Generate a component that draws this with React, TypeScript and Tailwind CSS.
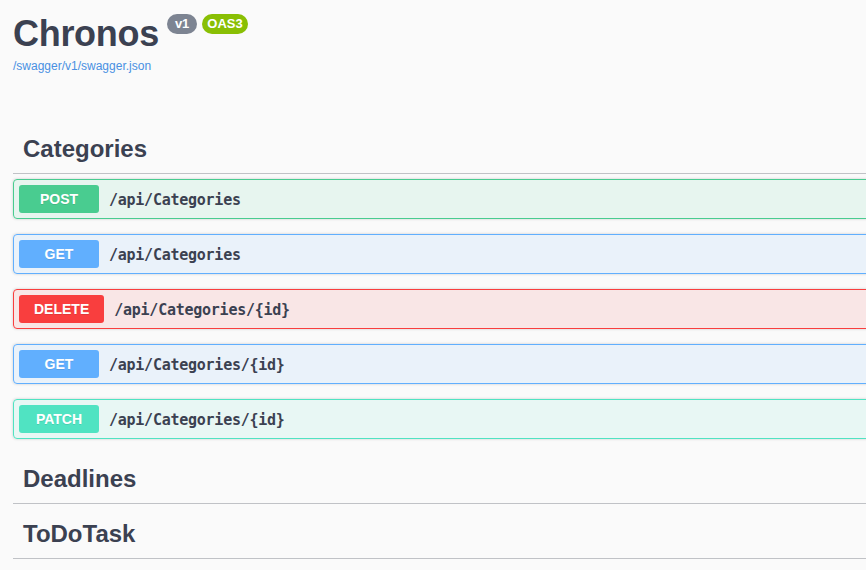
import React from "react";

type Method = "POST" | "GET" | "DELETE" | "PATCH";

interface Operation {
  method: Method;
  path: string;
}

const methodStyles: Record<Method, { block: string; button: string }> = {
  POST: { block: "border-[#49cc90] bg-[#49cc90]/10", button: "bg-[#49cc90]" },
  GET: { block: "border-[#61affe] bg-[#61affe]/10", button: "bg-[#61affe]" },
  DELETE: { block: "border-[#f93e3e] bg-[#f93e3e]/10", button: "bg-[#f93e3e]" },
  PATCH: { block: "border-[#50e3c2] bg-[#50e3c2]/10", button: "bg-[#50e3c2]" },
};

const categories: Operation[] = [
  { method: "POST", path: "/api/Categories" },
  { method: "GET", path: "/api/Categories" },
  { method: "DELETE", path: "/api/Categories/{id}" },
  { method: "GET", path: "/api/Categories/{id}" },
  { method: "PATCH", path: "/api/Categories/{id}" },
];

function TagHeader({ name }: { name: string }) {
  return (
    <div className="box-border flex h-[50px] items-center border-b border-[#3b4151]/30 pl-[10px] mb-[5px]">
      <h3 className="text-[24px] leading-[29px] font-bold text-[#3b4151]">{name}</h3>
    </div>
  );
}

function OpBlock({ op }: { op: Operation }) {
  const s = methodStyles[op.method];
  return (
    <div
      className={`box-border h-[40px] mb-[15px] flex items-center rounded-[4px] border p-[5px] shadow-[0_0_3px_rgba(0,0,0,0.19)] ${s.block}`}
    >
      <span
        className={`flex h-[28px] min-w-[80px] items-center justify-center rounded-[3px] px-[15px] text-[14px] font-bold text-white [text-shadow:0_1px_0_rgba(0,0,0,0.1)] ${s.button}`}
      >
        {op.method}
      </span>
      <span className="px-[10px] pt-[2px] font-['DejaVu_Sans_Mono',monospace] text-[15px] tracking-[-0.25px] font-semibold text-[#3b4151]">
        {op.path}
      </span>
    </div>
  );
}

export default function App() {
  return (
    <div className="h-[570px] w-full overflow-hidden bg-[#fafafa] font-['Liberation_Sans',Arial,sans-serif]">
      <div className="w-[1400px] px-[13px]">
        <div className="pt-[13px]">
          <div className="flex items-start">
            <h2 className="text-[36px] leading-[42px] tracking-[-0.3px] font-bold text-[#3b4151]">Chronos</h2>
            <span className="ml-[8px] mt-[1px] h-[20px] rounded-full bg-[#7d8492] px-[8px] text-[13px] leading-[20px] font-bold text-white">
              v1
            </span>
            <span className="ml-[5px] mt-[1px] h-[20px] rounded-full bg-[#89bf04] px-[5px] text-[13px] leading-[20px] font-bold text-white">
              OAS3
            </span>
          </div>
          <a className="mt-[4px] block text-[12px] leading-[15px] text-[#4990e2]" href="#">
            /swagger/v1/swagger.json
          </a>
        </div>

        <div className="mt-[50px]">
          <TagHeader name="Categories" />
          {categories.map((op, i) => (
            <OpBlock key={i} op={op} />
          ))}
          <TagHeader name="Deadlines" />
          <TagHeader name="ToDoTask" />
        </div>
      </div>
    </div>
  );
}
